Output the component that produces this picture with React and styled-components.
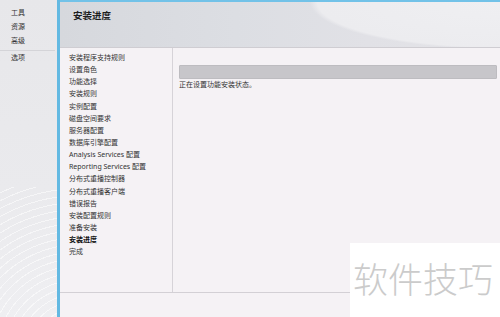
import React from "react";
import styled, { createGlobalStyle } from "styled-components";

const Global = createGlobalStyle`
  html, body { margin: 0; padding: 0; }
  body {
    width: 500px; height: 317px; overflow: hidden;
    font-family: "Noto Sans", "Noto Sans CJK SC", sans-serif;
    color: #2b2b2b;
  }
`;

const Frame = styled.div`
  position: relative;
  display: flex;
  width: 500px;
  height: 317px;
  overflow: hidden;
`;

const Sidebar = styled.div`
  width: 60px;
  flex: none;
  border-right: 3px solid #63b9e2;
  background:
    repeating-radial-gradient(circle at 140% 130%, transparent 0 6px, rgba(255,255,255,0.55) 6px 7px) bottom left / 57px 130px no-repeat,
    linear-gradient(180deg, #e7e7ea 0%, #eaeaed 60%, #efeff2 100%);
  padding-top: 6px;
  box-sizing: border-box;
`;

const SideItem = styled.div`
  height: 14px;
  line-height: 14px;
  padding-left: 11px;
  font-size: 7px;
  color: #333;
`;

const SideSep = styled.div`
  height: 1px;
  margin: 2px 2px 0 0;
  background: #d4d4d8;
`;

const Main = styled.div`
  flex: 1;
  display: flex;
  flex-direction: column;
  border-top: 2px solid #72c2e8;
  background: #f5f2f5;
`;

const Header = styled.div`
  height: 46px;
  flex: none;
  box-sizing: border-box;
  border-bottom: 1px solid #cfcdd2;
  padding: 7px 0 0 13px;
  background:
    radial-gradient(ellipse 190px 47px at 100% 0%, #efeff2 0%, #ececef 96%, rgba(236,236,239,0) 100%),
    linear-gradient(90deg, #d6d8dd 0%, #dcdee3 40%, #e1e1e6 70%, #e4e4e8 100%);
`;

const Title = styled.div`
  font-size: 9.5px;
  font-weight: 700;
  line-height: 13px;
  color: #1e1e1e;
`;

const Body = styled.div`
  flex: 1;
  display: flex;
  min-height: 0;
`;

const Nav = styled.div`
  width: 113px;
  flex: none;
  border-right: 1px solid #d6d3d8;
  padding: 4px 0 0 9px;
  box-sizing: border-box;
`;

const NavItem = styled.div`
  height: 12.15px;
  line-height: 12.15px;
  font-size: 7px;
  white-space: nowrap;
  color: ${p => (p.$active ? "#111" : "#333")};
  font-weight: ${p => (p.$active ? 700 : 400)};
`;

const Content = styled.div`
  flex: 1;
  padding: 17px 3px 0 6px;
`;

const Progress = styled.div`
  height: 12px;
  border: 1px solid #bdbcc0;
  background: #c7c6ca;
  border-radius: 1px;
`;

const Status = styled.div`
  font-size: 7px;
  line-height: 8px;
  margin-top: 2px;
  color: #333;
`;

const Footer = styled.div`
  height: 24px;
  flex: none;
  border-top: 1px solid #d3d0d5;
`;

const Watermark = styled.div`
  position: absolute;
  right: 0;
  bottom: 0;
  width: 150px;
  height: 74px;
  background: #ffffff;
  box-sizing: border-box;
  padding: 14px 0 0 3px;
  font-family: "Noto Sans CJK SC", sans-serif;
  font-size: 35px;
  line-height: 42px;
  font-weight: 300;
  color: #cbcbcb;
`;

const navItems = [
  "安装程序支持规则",
  "设置角色",
  "功能选择",
  "安装规则",
  "实例配置",
  "磁盘空间要求",
  "服务器配置",
  "数据库引擎配置",
  "Analysis Services 配置",
  "Reporting Services 配置",
  "分布式重播控制器",
  "分布式重播客户端",
  "错误报告",
  "安装配置规则",
  "准备安装",
  "安装进度",
  "完成",
];

export default function App() {
  return (
    <>
      <Global />
      <Frame>
        <Sidebar>
          <SideItem>工具</SideItem>
          <SideItem>资源</SideItem>
          <SideItem>高级</SideItem>
          <SideSep />
          <SideItem>选项</SideItem>
        </Sidebar>
        <Main>
          <Header>
            <Title>安装进度</Title>
          </Header>
          <Body>
            <Nav>
              {navItems.map(t => (
                <NavItem key={t} $active={t === "安装进度"}>{t}</NavItem>
              ))}
            </Nav>
            <Content>
              <Progress />
              <Status>正在设置功能安装状态。</Status>
            </Content>
          </Body>
          <Footer />
        </Main>
        <Watermark>软件技巧</Watermark>
      </Frame>
    </>
  );
}
